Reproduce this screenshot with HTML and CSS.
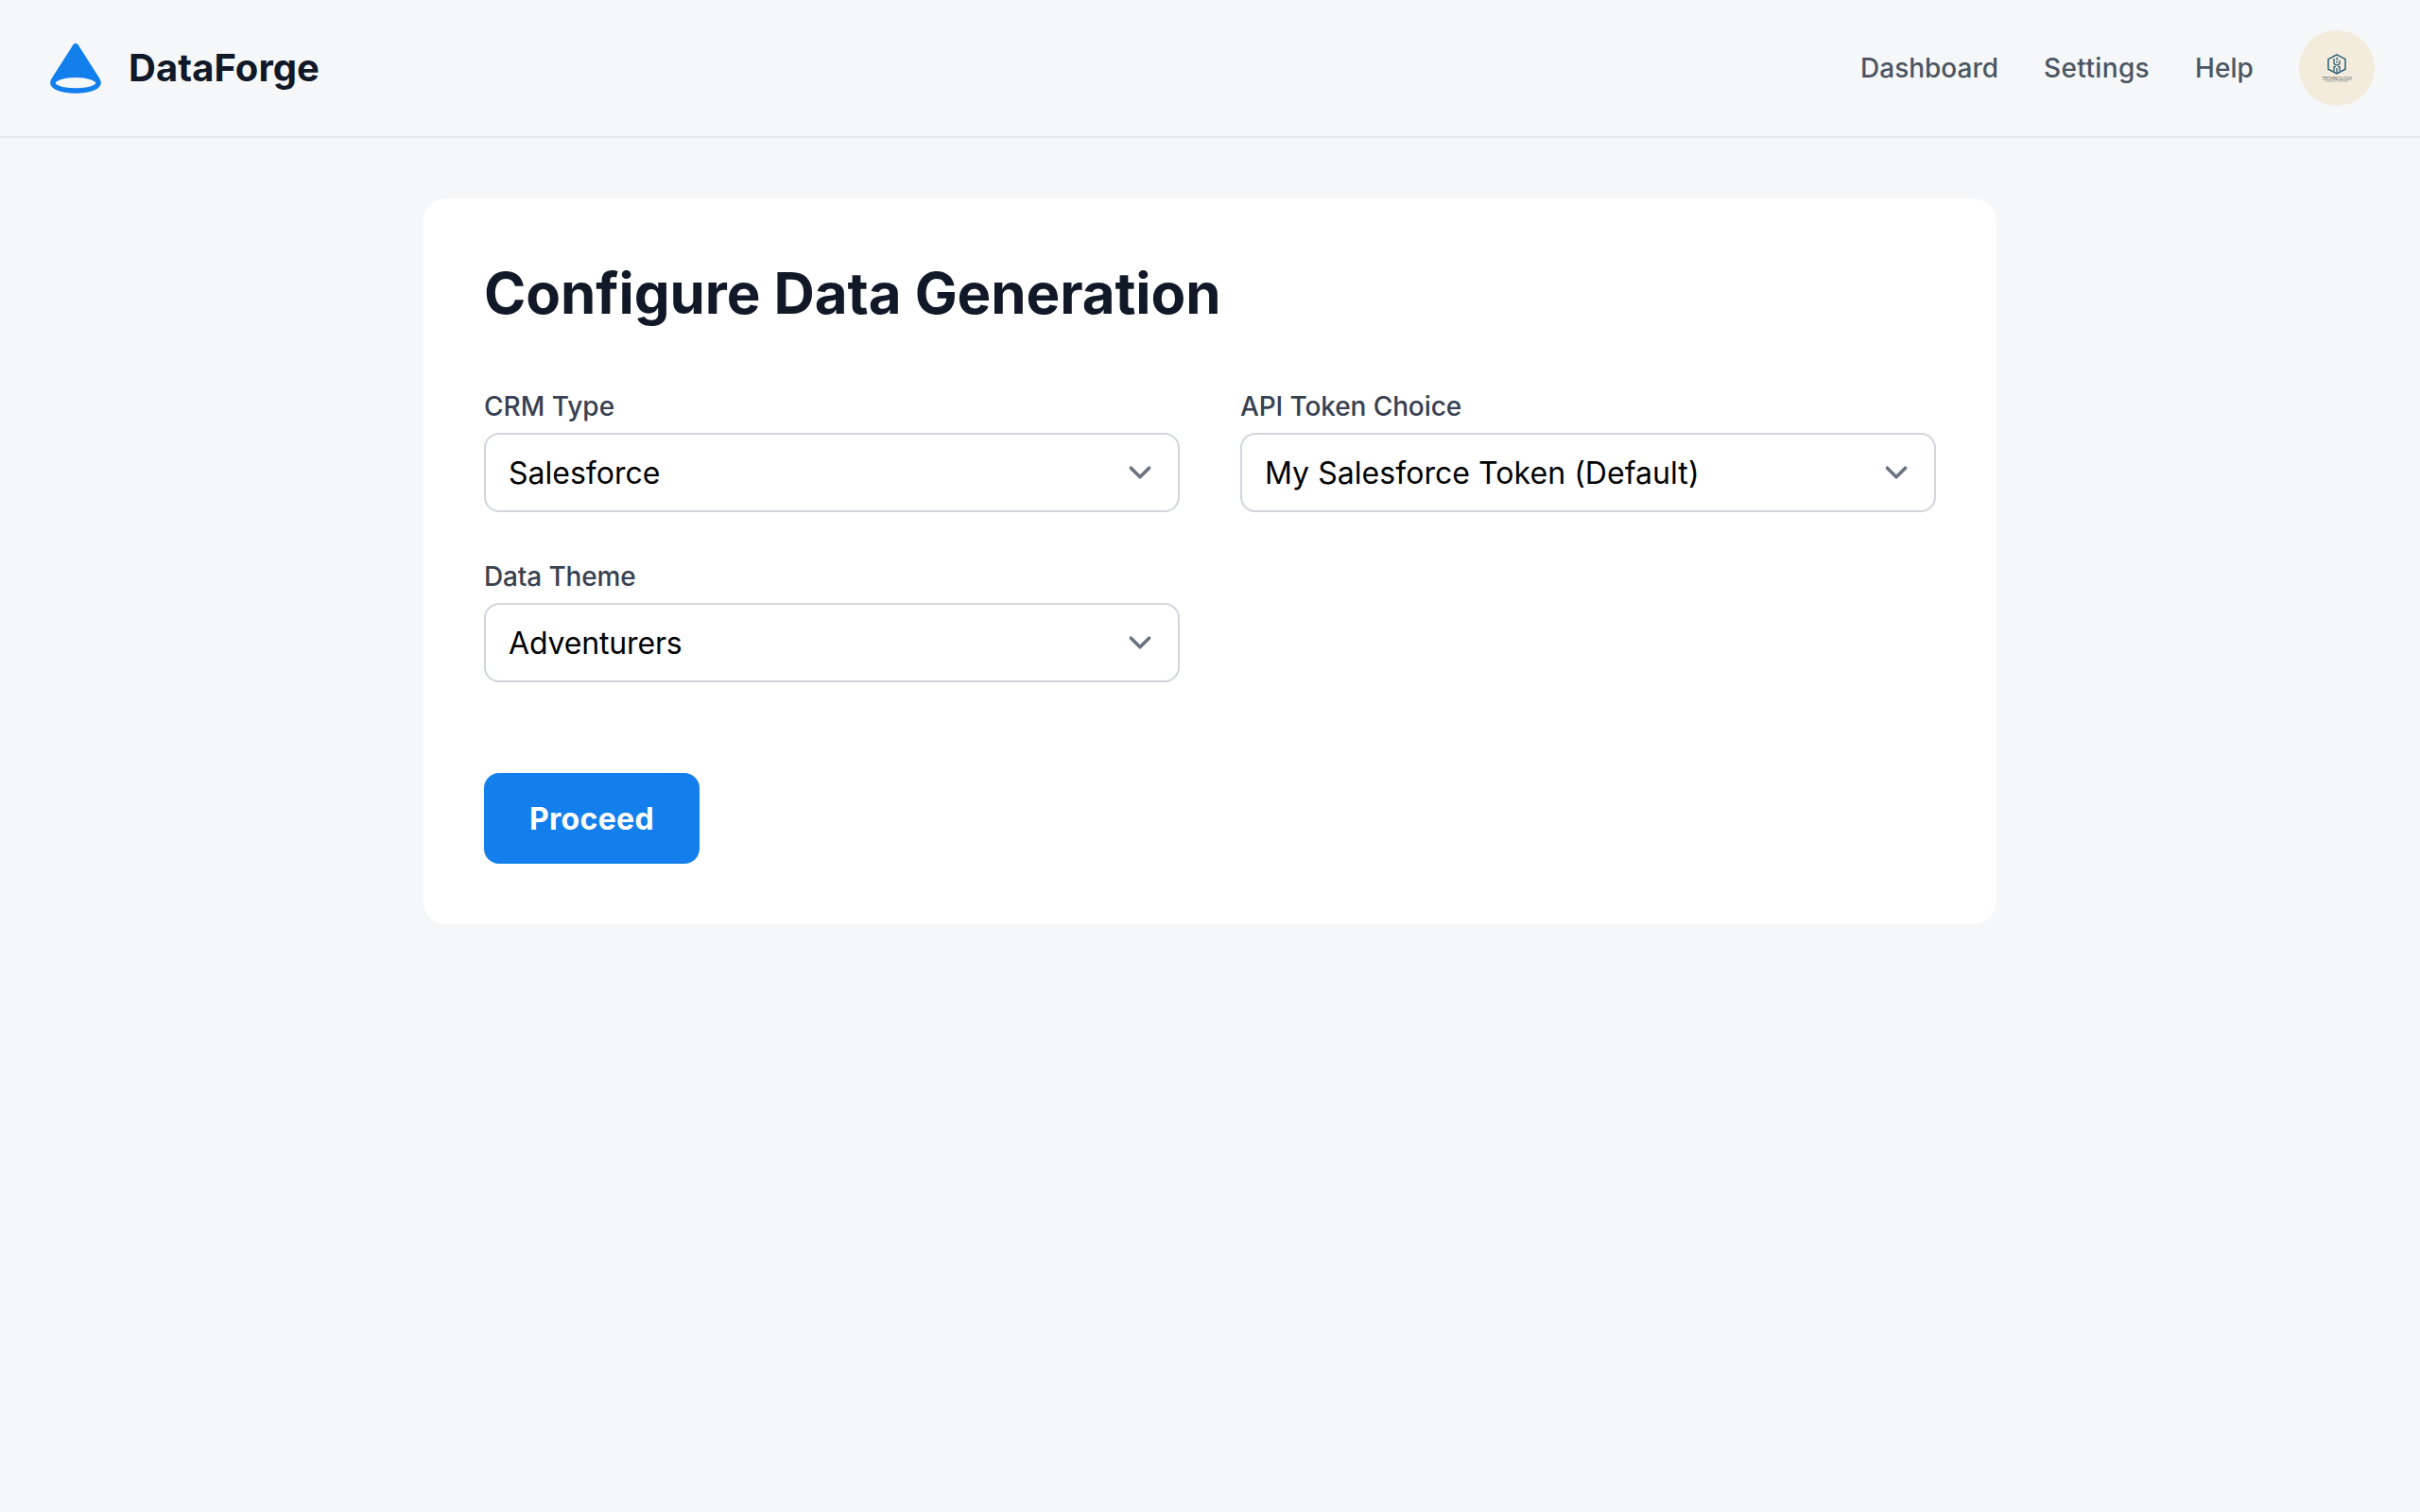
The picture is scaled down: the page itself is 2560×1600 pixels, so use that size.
FILE: index.html
```html
<!DOCTYPE html>
<html lang="en">
<head>
<meta charset="utf-8">
<title>DataForge</title>
<link rel="stylesheet" href="styles.css">
</head>
<body>
<header class="header">
  <div class="brand">
    <svg class="brand-icon" viewBox="0 0 64 64" fill="currentColor" aria-hidden="true">
      <path fill-rule="evenodd" d="M29.300 7.400C30.500 5.600 33.500 5.600 34.700 7.400L57.200 42.800C58.300 44.600 58.800 46.200 58.800 47.800C58.800 54.400 47 58.800 32 58.800C17 58.800 5.200 54.400 5.200 47.800C5.200 46.200 5.700 44.600 6.800 42.800ZM32 41.900C20 41.900 10.800 45.300 10.800 47.700C10.800 50.200 19.500 53.200 32 53.200C44.500 53.200 53.200 50.200 53.200 47.700C53.200 45.300 44 41.900 32 41.900Z"/>
    </svg>
    <span class="brand-name">DataForge</span>
  </div>
  <nav class="nav">
    <a class="nav-link">Dashboard</a>
    <a class="nav-link nav-link-wide">Settings</a>
    <a class="nav-link nav-link-end">Help</a>
    <svg class="avatar" viewBox="0 0 80 80">
      <rect width="80" height="80" fill="#f3ebdb"/>
      <g fill="none" stroke="#2b6076">
        <path d="M40 25.800L49 30.600V41.200L40 46L31 41.200V30.600Z" stroke-width="1.500"/>
        <path d="M37 30V34.500Q37 36.800 40 36.800Q43 36.800 43 34.500V32M40 28.800V30.500L41.500 31M40 32.500V34.500M37 43.500V38.700H39M41 38.700H43V43.500M40 40V45.500" stroke-width="1.300"/>
      </g>
      <text class="avatar-title" x="40.200" y="52.600" textLength="32">TECHNOLOGY</text>
      <text class="avatar-tagline" x="40" y="55" textLength="22">DIGITAL SYSTEM</text>
    </svg>
  </nav>
</header>
<main class="main">
  <section class="card">
    <h1 class="title">Configure Data Generation</h1>
    <form class="form">
      <div class="fields">
        <label class="field"><span class="label">CRM Type</span>
          <span class="control"><select class="select"><option>Salesforce</option></select><svg class="chevron" viewBox="0 0 20 20"><path d="m6 8 4 4 4-4"/></svg></span>
        </label>
        <label class="field"><span class="label label-token">API Token Choice</span>
          <span class="control"><select class="select select-token"><option>My Salesforce Token (Default)</option></select><svg class="chevron" viewBox="0 0 20 20"><path d="m6 8 4 4 4-4"/></svg></span>
        </label>
        <label class="field"><span class="label label-theme">Data Theme</span>
          <span class="control"><select class="select select-theme"><option>Adventurers</option></select><svg class="chevron" viewBox="0 0 20 20"><path d="m6 8 4 4 4-4"/></svg></span>
        </label>
      </div>
      <button class="button" type="button">Proceed</button>
    </form>
  </section>
</main>
</body>
</html>
```
FILE: styles.css
```css
* { box-sizing: border-box; }
body {
  margin: 0;
  min-height: 100vh;
  background: #f6f7f8;
  color: #111827;
  font-family: Inter, sans-serif;
  font-size: 32px;
  line-height: 48px;
}
.header {
  display: flex;
  align-items: center;
  justify-content: space-between;
  padding: 32px 48px;
  border-bottom: 2px solid #e5e7eb;
}
.brand { display: flex; align-items: center; gap: 24px; }
.brand-icon { display: block; width: 64px; height: 64px; color: #137fec; }
.brand-name { font-size: 40px; line-height: 56px; font-weight: 700; letter-spacing: 0.06px; }
.nav { display: flex; align-items: center; gap: 48px; }
.nav-link { font-size: 28px; line-height: 40px; font-weight: 500; color: #4b5563; }
.nav-link-wide { letter-spacing: 0.35px; }
.nav-link-end { letter-spacing: 0.08px; }
.avatar { display: block; width: 80px; height: 80px; border-radius: 50%; }
.avatar-title { font-size: 4.8px; font-weight: 400; text-anchor: middle; fill: #536568; }
.avatar-tagline { font-size: 2.2px; text-anchor: middle; fill: #708080; }
.main { display: flex; justify-content: center; padding: 64px 48px; }
.card { width: 1664px; padding: 64px; border-radius: 24px; background: #fff; }
.title { margin: 0 0 64px; font-size: 60px; line-height: 72px; font-weight: 700; letter-spacing: -0.08px; }
.form { display: flex; flex-direction: column; align-items: flex-start; gap: 96px; }
.fields { display: grid; grid-template-columns: 1fr 1fr; gap: 48px 64px; width: 100%; }
.field { display: flex; flex-direction: column; gap: 8px; }
.label { font-size: 28px; line-height: 40px; font-weight: 500; color: #374151; }
.label-token { letter-spacing: -0.1px; }
.label-theme { letter-spacing: -0.15px; }
.control { display: grid; align-items: center; }
.select {
  grid-area: 1 / 1;
  appearance: none;
  width: 100%;
  height: 84px;
  margin: 0;
  padding: 17px 80px 15px 24px;
  border: 2px solid #d1d5db;
  border-radius: 16px;
  background: #fff;
  color: #000;
  font: 400 32px/48px Inter, sans-serif;
}
.select-token { letter-spacing: 0.05px; }
.select-theme { letter-spacing: -0.15px; }
.chevron {
  grid-area: 1 / 1;
  justify-self: end;
  width: 48px;
  height: 48px;
  margin-right: 18px;
  pointer-events: none;
  fill: none;
  stroke: #6b7280;
  stroke-width: 1.5;
  stroke-linecap: round;
  stroke-linejoin: round;
}
.button {
  width: 228px;
  height: 96px;
  padding: 2px 0 0;
  border: 0;
  border-radius: 16px;
  background: #137fec;
  color: #fff;
  font: 700 32px/48px Inter, sans-serif;
  letter-spacing: 0.32px;
}
```
